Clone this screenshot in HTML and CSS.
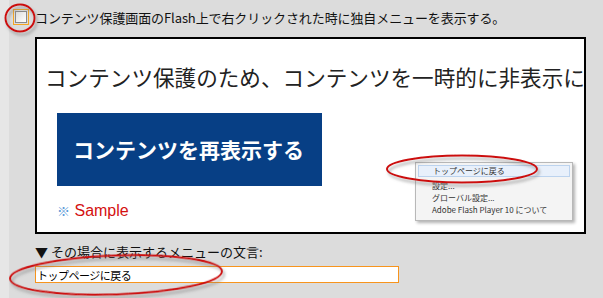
FILE: index.html
```html
<!DOCTYPE html>
<html lang="ja">
<head>
    <meta charset="UTF-8">
    <title>コンテンツ保護設定</title>
    <link rel="stylesheet" href="styles.css">
</head>
<body>
    <div class="page">
        <label class="opt">
            <span class="check"><span class="check-box"></span></span>
            <span>コンテンツ保護画面のFlash上で右クリックされた時に独自メニューを表示する。</span>
        </label>

        <div class="preview">
            <h1 class="notice">コンテンツ保護のため、コンテンツを一時的に非表示にしています</h1>
            <div class="stage">
                <div class="stage-left">
                    <div class="show-btn">コンテンツを再表示する</div>
                    <div class="sample"><span class="mark">※</span> Sample</div>
                </div>
                <ul class="ctx-menu">
                    <li class="active">トップページに戻る</li>
                    <li>設定...</li>
                    <li>グローバル設定...</li>
                    <li>Adobe Flash Player 10 について</li>
                </ul>
            </div>
        </div>

        <div class="field-label">▼ その場合に表示するメニューの文言:</div>
        <input class="field" type="text" value="トップページに戻る">
    </div>

    <!-- 注釈の赤丸 -->
    <svg class="marks" width="603" height="298" viewBox="0 0 603 298">
        <defs>
            <filter id="shade" x="-20%" y="-40%" width="140%" height="180%">
                <feDropShadow dx="2" dy="3" stdDeviation="1.6" flood-color="#777" flood-opacity="0.6"/>
            </filter>
        </defs>
        <g fill="none" stroke="#cc1111" stroke-width="2" filter="url(#shade)">
            <ellipse cx="20" cy="18" rx="14.5" ry="13.5"/>
            <ellipse cx="462" cy="169" rx="75" ry="13.5"/>
            <ellipse cx="116" cy="275" rx="106" ry="19.5" transform="rotate(-2 116 275)"/>
        </g>
    </svg>
</body>
</html>
```

FILE: styles.css
```css
body {
    margin: 0;
    background-color: #e6e6e6;
    font-family: "Noto Sans CJK JP", "Liberation Sans", sans-serif;
    color: #111;
    position: relative;
    overflow: hidden;
}
.page {
    margin-left: 9px;
    min-height: 298px;
    background-color: #dcdcdc;
    padding: 8px 0 0 4px;
    box-sizing: border-box;
}
.opt {
    display: flex;
    align-items: center;
    gap: 6px;
    height: 18px;
    font-size: 13px;
    letter-spacing: -0.1px;
}
.check {
    width: 16px;
    height: 16px;
    box-sizing: border-box;
    border: 1px solid #f5a623;
    display: flex;
    align-items: center;
    justify-content: center;
}
.check-box {
    width: 12px;
    height: 12px;
    box-sizing: border-box;
    border: 1px solid #8a8a8a;
    background: linear-gradient(135deg, #dcdcdc, #ffffff);
}
.preview {
    margin: 11px 0 0 22px;
    width: 551px;
    height: 197px;
    box-sizing: border-box;
    border: 2px solid #000;
    background-color: #fff;
    overflow: hidden;
    padding: 23px 0 0 8px;
}
.notice {
    margin: 0;
    font-size: 21.6px;
    font-weight: normal;
    line-height: 30px;
    white-space: nowrap;
    color: #222;
}
.stage {
    display: flex;
    align-items: flex-start;
    margin-top: 21px;
    padding-left: 12px;
}
.show-btn {
    width: 265px;
    height: 73px;
    box-sizing: border-box;
    background-color: #073f85;
    color: #fff;
    font-size: 21px;
    font-weight: bold;
    display: flex;
    align-items: center;
    padding: 0 0 2px 16px;
}
.sample {
    margin-top: 16px;
    line-height: 18px;
    font-family: "Liberation Sans", sans-serif;
    font-size: 16px;
    color: #d41010;
}
.mark {
    color: #5a9ad8;
    font-size: 13px;
    font-family: "Noto Sans CJK JP", sans-serif;
}
.ctx-menu {
    list-style: none;
    margin: 49px 0 0 93px;
    padding: 2px 2px 4px;
    width: 158px;
    height: 59px;
    box-sizing: border-box;
    background-color: #f4f4f4;
    border: 1px solid #b8b8b8;
    box-shadow: 2px 2px 3px rgba(0, 0, 0, 0.3);
    font-size: 8px;
    color: #333;
}
.ctx-menu li {
    height: 12px;
    line-height: 12px;
    padding-left: 14px;
    white-space: nowrap;
}
.ctx-menu li.active {
    height: 10px;
    line-height: 10px;
    margin-bottom: 3px;
    background-color: #e8f0fb;
    border: 1px solid #bcd3ee;
}
.field-label {
    margin-top: 10px;
    margin-left: 22px;
    font-size: 13px;
    line-height: 16px;
}
.field {
    display: block;
    margin: 6px 0 0 22px;
    width: 364px;
    height: 17px;
    box-sizing: border-box;
    border: 1px solid #f7941d;
    padding: 0 1px;
    font-family: "Noto Sans CJK JP", sans-serif;
    font-size: 11px;
    letter-spacing: -0.5px;
    color: #000;
    background-color: #fff;
    outline: none;
}
.marks {
    position: absolute;
    top: 0;
    left: 0;
    pointer-events: none;
}
```
